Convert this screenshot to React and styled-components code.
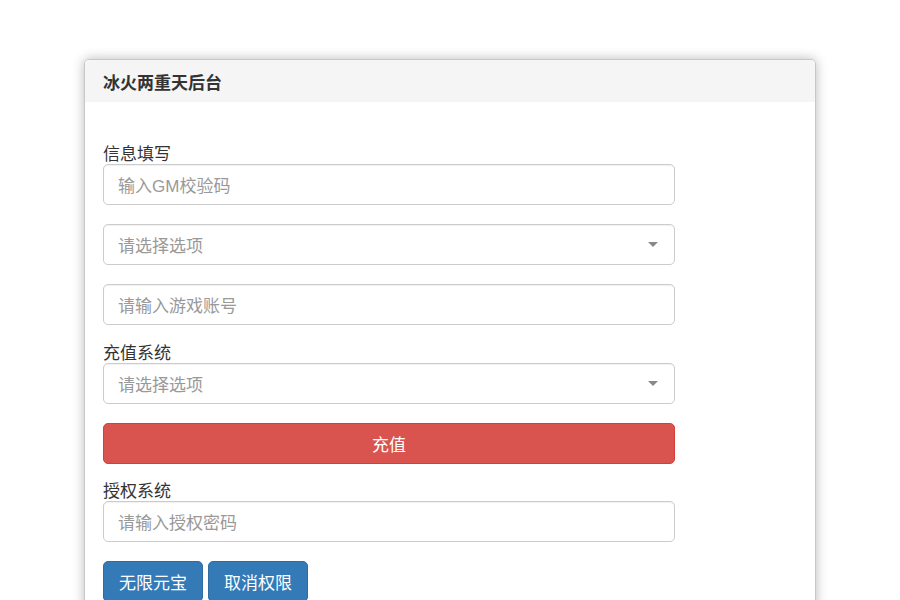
import React from "react";
import styled, { createGlobalStyle } from "styled-components";

const Global = createGlobalStyle`
  html, body { margin: 0; padding: 0; background: #fff; }
  body { font-family: "Liberation Sans", "Noto Sans CJK SC", sans-serif; color: #333; }
  * { box-sizing: border-box; }
`;

const Page = styled.div`
  padding-top: 59px;
  display: flex;
  justify-content: center;
`;

const Card = styled.div`
  width: 732px;
  min-height: 600px;
  border: 1px solid #c8c8c8;
  border-radius: 5px;
  background: #fff;
  box-shadow: 0 0 12px rgba(0, 0, 0, 0.28);
  overflow: hidden;
`;

const Header = styled.div`
  height: 42px;
  background: #f5f5f5;
  padding: 0 18px;
  display: flex;
  align-items: center;
  font-size: 17px;
  font-weight: bold;
  color: #333;
`;

const Body = styled.div`
  padding: 43px 18px 18px;
`;

const Form = styled.div`
  width: 572px;
  display: flex;
  flex-direction: column;
`;

const Group = styled.div`
  margin-bottom: ${(p) => p.$gap ?? 19}px;
  display: flex;
  flex-direction: column;
`;

const Label = styled.div`
  font-size: 17px;
  line-height: 19px;
  color: #333;
`;

const Field = styled.div`
  height: 41px;
  border: 1px solid #ccc;
  border-radius: 5px;
  padding: 0 15px 0 14px;
  display: flex;
  align-items: center;
  justify-content: space-between;
  font-size: 17px;
  color: #999;
  box-shadow: inset 0 1px 1px rgba(0, 0, 0, 0.06);
`;

const Caret = styled.span`
  width: 0;
  height: 0;
  border-left: 5px solid transparent;
  border-right: 5px solid transparent;
  border-top: 5px solid #888;
  margin-right: 1px;
`;

const WideButton = styled.div`
  height: 41px;
  border-radius: 5px;
  background: #d9534f;
  border: 1px solid #d43f3a;
  color: #fff;
  font-size: 17px;
  display: flex;
  align-items: center;
  justify-content: center;
`;

const ButtonRow = styled.div`
  display: flex;
  gap: 5px;
`;

const BlueButton = styled.div`
  width: 100px;
  height: 41px;
  border-radius: 5px;
  background: #337ab7;
  border: 1px solid #2e6da4;
  color: #fff;
  font-size: 17px;
  display: flex;
  align-items: center;
  justify-content: center;
`;

export default function App() {
  return (
    <>
      <Global />
      <Page>
        <Card>
          <Header>冰火两重天后台</Header>
          <Body>
            <Form>
              <Group>
                <Label>信息填写</Label>
                <Field>输入GM校验码</Field>
              </Group>
              <Group>
                <Field>
                  请选择选项
                  <Caret />
                </Field>
              </Group>
              <Group>
                <Field>请输入游戏账号</Field>
              </Group>
              <Group>
                <Label>充值系统</Label>
                <Field>
                  请选择选项
                  <Caret />
                </Field>
              </Group>
              <Group $gap={18}>
                <WideButton>充值</WideButton>
              </Group>
              <Group>
                <Label>授权系统</Label>
                <Field>请输入授权密码</Field>
              </Group>
              <ButtonRow>
                <BlueButton>无限元宝</BlueButton>
                <BlueButton>取消权限</BlueButton>
              </ButtonRow>
            </Form>
          </Body>
        </Card>
      </Page>
    </>
  );
}
